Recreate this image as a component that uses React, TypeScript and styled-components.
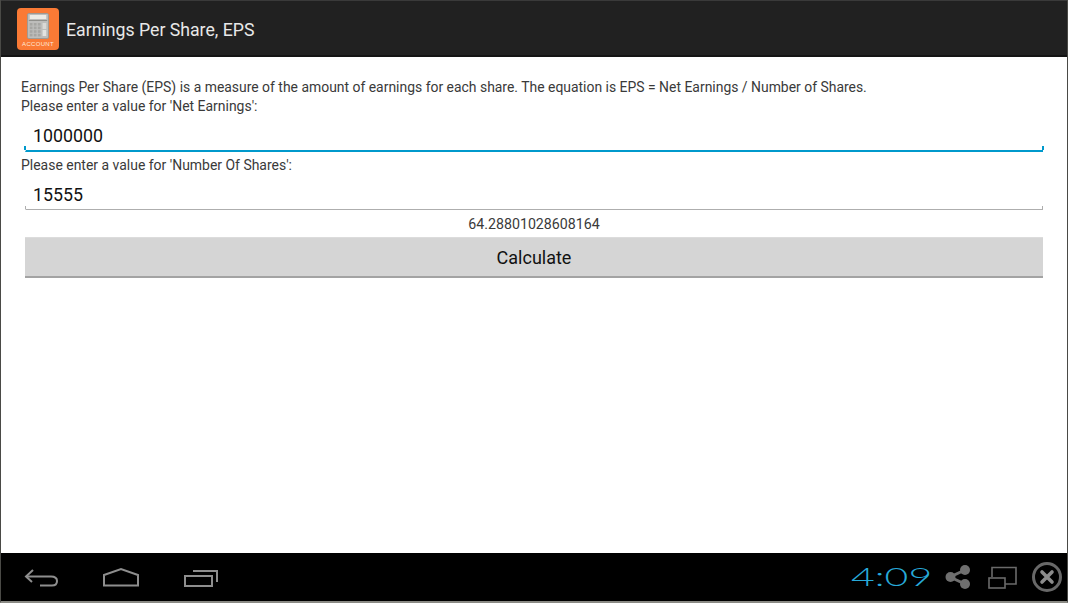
import React from "react";
import styled, { createGlobalStyle } from "styled-components";

const Global = createGlobalStyle`
  html, body { margin: 0; padding: 0; background: #fff; }
  #root { width: 1068px; height: 603px; }
`;

const Frame = styled.div`
  width: 1068px;
  height: 603px;
  box-sizing: border-box;
  display: flex;
  flex-direction: column;
  background: #fff;
  border-left: 1px solid #4a4a46;
  border-right: 1px solid #4a4a46;
  border-bottom: 2px solid #8a8a84;
  font-family: Roboto, "Liberation Sans", sans-serif;
  overflow: hidden;
`;

const ActionBar = styled.header`
  height: 57px;
  flex: none;
  box-sizing: border-box;
  display: flex;
  align-items: center;
  padding: 2px 0 0 16px;
  gap: 7px;
  background: #212121;
  border-top: 1px solid #3a3a3a;
  border-bottom: 2px solid #141414;
`;

const AppIcon = styled.div`
  width: 42px;
  height: 42px;
  border-radius: 4px;
  background: #fa7a35;
  display: flex;
  flex-direction: column;
  align-items: center;
  padding-top: 5px;
  box-sizing: border-box;
`;

const IconLabel = styled.span`
  font-family: "Liberation Sans", sans-serif;
  font-size: 6px;
  line-height: 6px;
  letter-spacing: 0.3px;
  color: #ffe9da;
  margin-top: 2px;
  white-space: nowrap;
`;

const Title = styled.h1`
  margin: 2px 0 0;
  font-size: 17.7px;
  font-weight: 400;
  color: #e8e8e8;
`;

const Content = styled.main`
  flex: 1;
  padding: 21px 24px 0 20px;
  display: flex;
  flex-direction: column;
`;

const Label = styled.p<{ $gap?: number; $tight?: boolean }>`
  margin: ${(p) => p.$gap ?? 0}px 0 0;
  font-size: ${(p) => (p.$tight ? "13.93px" : "13.96px")};
  line-height: 19px;
  color: #3a3a3a;
  white-space: nowrap;
`;

const Field = styled.div<{ $active?: boolean }>`
  margin-left: 4px;
  height: ${(p) => (p.$active ? "36px" : "35px")};
  box-sizing: border-box;
  padding-left: 7px;
  display: flex;
  align-items: flex-end;
  font-size: 17.8px;
  line-height: 28px;
  color: #111;
  border-bottom: ${(p) => (p.$active ? "2px solid #0099cc" : "1px solid #aeaeae")};
  border-left: 1px solid transparent;
  position: relative;
  &::before, &::after {
    content: "";
    position: absolute;
    bottom: 0;
    width: ${(p) => (p.$active ? "2px" : "1px")};
    height: ${(p) => (p.$active ? "4px" : "3px")};
    background: ${(p) => (p.$active ? "#0099cc" : "#aeaeae")};
  }
  &::before { left: ${(p) => (p.$active ? "-2px" : "-1px")}; }
  &::after { right: ${(p) => (p.$active ? "-1px" : "0")}; }
`;

const Result = styled.div`
  margin-left: 4px;
  margin-top: 5px;
  height: 19px;
  text-align: center;
  font-size: 14.2px;
  line-height: 19px;
  color: #3a3a3a;
`;

const CalcButton = styled.button`
  margin: 3px 0 0 4px;
  height: 41px;
  border: none;
  border-bottom: 2px solid #a3a3a3;
  border-top: 1px solid #dcdcdc;
  background: #d5d5d5;
  font-family: inherit;
  font-size: 18px;
  color: #111;
  padding: 0;
`;

const NavBar = styled.footer`
  height: 48px;
  flex: none;
  background: #000;
  display: flex;
  align-items: center;
  justify-content: space-between;
`;

const NavGroup = styled.div`
  display: flex;
  align-items: center;
`;

const NavLeft = styled(NavGroup)`
  padding-left: 23px;
  gap: 43px;
`;

const NavRight = styled(NavGroup)`
  padding-right: 4px;
`;

const Clock = styled.span`
  display: inline-block;
  width: 80px;
  margin-right: 14px;
  font-family: Lato, sans-serif;
  font-weight: 300;
  font-size: 25px;
  line-height: 28px;
  color: #27a9d8;
  transform: translateY(-1px) scaleX(1.64);
  transform-origin: left center;
  white-space: nowrap;
`;

const Svg = styled.svg<{ $ml?: number }>`
  display: block;
  flex: none;
  margin-left: ${(p) => p.$ml ?? 0}px;
`;

export default function App() {
  return (
    <>
      <Global />
      <Frame>
        <ActionBar>
          <AppIcon>
            <Svg width="22" height="26" viewBox="0 0 24 26" preserveAspectRatio="none">
              <rect x="0.5" y="0.5" width="23" height="25" rx="1.5" fill="#bdbdbb" stroke="#9a9a96" />
              <rect x="3" y="2" width="18" height="4" fill="#ecece6" />
              <rect x="2" y="7" width="20" height="1" fill="#8f8f8b" />
              {[0, 1, 2, 3].map((r) =>
                [0, 1, 2].map((c) => (
                  <rect key={`${r}-${c}`} x={3 + c * 4.4} y={10 + r * 3.6} width="3" height="2.6" fill="#a6a6a3" />
                ))
              )}
              <rect x="17" y="10" width="4" height="6" fill="#d9d9d6" />
              <rect x="17" y="17" width="4" height="6" fill="#e3e3e0" />
            </Svg>
            <IconLabel>ACCOUNT</IconLabel>
          </AppIcon>
          <Title>Earnings Per Share, EPS</Title>
        </ActionBar>
        <Content>
          <Label $tight>Earnings Per Share (EPS) is a measure of the amount of earnings for each share. The equation is EPS = Net Earnings / Number of Shares.</Label>
          <Label>Please enter a value for 'Net Earnings':</Label>
          <Field $active>1000000</Field>
          <Label $gap={4}>Please enter a value for 'Number Of Shares':</Label>
          <Field>15555</Field>
          <Result>64.28801028608164</Result>
          <CalcButton>Calculate</CalcButton>
        </Content>
        <NavBar>
          <NavLeft>
            <Svg width="36" height="20" viewBox="0 0 36 20" fill="none" stroke="#8e8e8e" strokeWidth="2">
              <path d="M9 3 L2 9.5 L8 15" />
              <path d="M2 9.5 H27 C31 9.5 33 11 33 14 C33 17.5 31 18.5 28 18.5 H16" />
            </Svg>
            <Svg width="36" height="20" viewBox="0 0 36 20" fill="none" stroke="#8e8e8e" strokeWidth="2">
              <path d="M1 8 L18 2 L35 8 V18.5 H1 Z" />
            </Svg>
            <Svg $ml={1} width="36" height="20" viewBox="0 0 36 20" fill="none" stroke="#8e8e8e" strokeWidth="2">
              <rect x="2" y="9" width="27" height="10" />
              <path d="M10 4 H34 V15" />
            </Svg>
          </NavLeft>
          <NavRight>
            <Clock>4:09</Clock>
            <Svg width="26" height="26" viewBox="0 0 26 26" fill="#6f6f6f" stroke="none">
              <path d="M20 6 L5 13 L20 20" fill="none" stroke="#6f6f6f" strokeWidth="3" />
              <circle cx="20" cy="6" r="5" />
              <circle cx="5.5" cy="13" r="5" />
              <circle cx="20" cy="20" r="5" />
            </Svg>
            <Svg $ml={17} width="29" height="24" viewBox="0 0 29 24" fill="none" stroke="#6a6a6a" strokeWidth="1.6">
              <path d="M4 12 V2.5 H28 V19 H17" />
              <rect x="1" y="13" width="16" height="10" />
            </Svg>
            <Svg $ml={14} width="32" height="32" viewBox="0 0 32 32">
              <circle cx="16" cy="16" r="13.5" fill="none" stroke="#686868" strokeWidth="3" />
              <path d="M11 11 L21 21 M21 11 L11 21" stroke="#8c8c8c" strokeWidth="3.6" strokeLinecap="round" />
            </Svg>
          </NavRight>
        </NavBar>
      </Frame>
    </>
  );
}
